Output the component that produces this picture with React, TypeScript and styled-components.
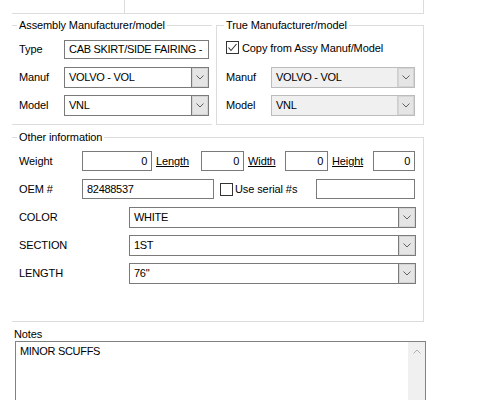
import { ReactNode } from "react";
import styled, { createGlobalStyle } from "styled-components";

const GlobalStyle = createGlobalStyle`
  body {
    margin: 0;
    background: #ffffff;
    font-family: "Liberation Sans", Arial, sans-serif;
    font-size: 11px;
    letter-spacing: -0.1px;
    color: #000000;
  }
`;

const Page = styled.div`
  width: 412px;
  margin-left: 12px;
`;

/* bottom edge of the panel above the group boxes */
const TopStrip = styled.div`
  display: flex;
  height: 13px;
  border-bottom: 1px solid #dcdcdc;
  border-right: 1px solid #dcdcdc;
`;

const StripCell = styled.div`
  width: 112px;
  border-right: 1px solid #dcdcdc;
`;

const GroupRow = styled.div`
  display: flex;
  gap: 4px;
  margin-top: 4px;
`;

interface GroupProps {
  $width: number;
  $noLeft?: boolean;
  $noRight?: boolean;
  $top?: number;
}

const Group = styled.fieldset<GroupProps>`
  box-sizing: border-box;
  width: ${(p) => p.$width}px;
  margin: ${(p) => p.$top ?? 0}px 0 0 0;
  padding: 0;
  min-width: 0;
  border: 1px solid #dcdcdc;
  ${(p) => (p.$noLeft ? "border-left: none;" : "")}
  ${(p) => (p.$noRight ? "border-right: none;" : "")}
`;

const Legend = styled.legend<{ $offset: number }>`
  margin-left: ${(p) => p.$offset}px;
  padding: 0 2px;
  line-height: 14px;
  font-size: 11px;
`;

interface StackProps {
  $left: number;
  $bottom: number;
}

const Stack = styled.div<StackProps>`
  display: grid;
  grid-auto-rows: 28px;
  align-items: center;
  padding: 3px 8px ${(p) => p.$bottom}px ${(p) => p.$left}px;
`;

const Row = styled.div`
  display: flex;
  align-items: center;
`;

const Label = styled.span<{ $w: number }>`
  flex: none;
  width: ${(p) => p.$w}px;
  white-space: nowrap;
`;

const LinkLabel = styled(Label)`
  padding-left: 4px;
  box-sizing: border-box;
  text-decoration: underline;
`;

const CheckLabel = styled.span<{ $w: number }>`
  flex: none;
  box-sizing: border-box;
  display: flex;
  align-items: center;
  width: ${(p) => p.$w}px;
  padding-left: 6px;
  white-space: nowrap;
`;

const TextBox = styled.div<{ $w: number; $h?: number; $right?: boolean }>`
  box-sizing: border-box;
  flex: none;
  width: ${(p) => p.$w}px;
  height: ${(p) => p.$h ?? 20}px;
  border: 1px solid #7a7a7a;
  background: #ffffff;
  padding: 0 4px;
  display: flex;
  align-items: center;
  justify-content: ${(p) => (p.$right ? "flex-end" : "flex-start")};
  white-space: nowrap;
  overflow: hidden;
  letter-spacing: -0.3px;
`;

const ComboBox = styled.div<{ $w: number; $disabled?: boolean }>`
  box-sizing: border-box;
  flex: none;
  display: flex;
  width: ${(p) => p.$w}px;
  height: 21px;
  border: 1px solid ${(p) => (p.$disabled ? "#bcbcbc" : "#7a7a7a")};
  background: ${(p) => (p.$disabled ? "#f0f0f0" : "#ffffff")};
`;

const ComboValue = styled.div`
  flex: 1;
  display: flex;
  align-items: center;
  padding-left: 4px;
  white-space: nowrap;
  overflow: hidden;
  letter-spacing: -0.3px;
`;

const ComboButton = styled.div<{ $disabled?: boolean }>`
  flex: none;
  width: 16px;
  display: flex;
  align-items: center;
  justify-content: center;
  background: #e5e5e5;
  border-left: 1px solid ${(p) => (p.$disabled ? "#cfcfcf" : "#7a7a7a")};
  box-shadow: inset 0 0 0 1px #d4d4d4;
`;

const CheckRow = styled(Row)`
  align-self: start;
  margin-top: 6px;
`;

const CheckBox = styled.span<{ $gap?: number }>`
  box-sizing: border-box;
  flex: none;
  width: 13px;
  height: 13px;
  border: 1px solid #333333;
  background: #ffffff;
  margin-right: ${(p) => p.$gap ?? 3}px;
  display: flex;
  align-items: center;
  justify-content: center;
`;

const NotesLabel = styled.div`
  margin: 5px 0 0 2px;
  line-height: 14px;
`;

const NotesBox = styled.div`
  box-sizing: border-box;
  display: flex;
  width: 411px;
  height: 70px;
  margin-left: 3px;
  border: 1px solid #828282;
  background: #ffffff;
`;

const NotesText = styled.div`
  flex: 1;
  padding: 2px 4px;
  line-height: 14px;
  letter-spacing: -0.3px;
`;

const ScrollTrack = styled.div`
  flex: none;
  width: 17px;
  background: #f0f0f0;
  display: flex;
  justify-content: center;
  padding-top: 7px;
`;

function Chevron({ up = false, color = "#606060" }: { up?: boolean; color?: string }) {
  return (
    <svg width="8" height="5" viewBox="0 0 8 5">
      <polyline
        points={up ? "0.5,4.5 4,1 7.5,4.5" : "0.5,0.5 4,4 7.5,0.5"}
        fill="none"
        stroke={color}
        strokeWidth="1"
      />
    </svg>
  );
}

function Combo({ value, width, disabled }: { value: string; width: number; disabled?: boolean }) {
  return (
    <ComboBox $w={width} $disabled={disabled}>
      <ComboValue>{value}</ComboValue>
      <ComboButton $disabled={disabled}>
        <Chevron />
      </ComboButton>
    </ComboBox>
  );
}

function Check({ checked, gap, children }: { checked?: boolean; gap?: number; children: ReactNode }) {
  return (
    <>
      <CheckBox $gap={gap}>
        {checked && (
          <svg width="11" height="11" viewBox="0 0 11 11">
            <polyline points="1.5,5.5 4,8.5 9.5,2" fill="none" stroke="#333333" strokeWidth="1.1" />
          </svg>
        )}
      </CheckBox>
      <span>{children}</span>
    </>
  );
}

const attributes = [
  { name: "COLOR", value: "WHITE" },
  { name: "SECTION", value: "1ST" },
  { name: "LENGTH", value: "76\"" },
];

export default function App() {
  return (
    <>
      <GlobalStyle />
      <Page>
        <TopStrip>
          <StripCell />
        </TopStrip>

        <GroupRow>
          <Group $width={200} $noLeft $noRight>
            <Legend $offset={5}>Assembly Manufacturer/model</Legend>
            <Stack $left={7} $bottom={5}>
              <Row>
                <Label $w={45}>Type</Label>
                <TextBox $w={145} $h={19}>CAB SKIRT/SIDE FAIRING -</TextBox>
              </Row>
              <Row>
                <Label $w={45}>Manuf</Label>
                <Combo value="VOLVO - VOL" width={145} />
              </Row>
              <Row>
                <Label $w={45}>Model</Label>
                <Combo value="VNL" width={145} />
              </Row>
            </Stack>
          </Group>

          <Group $width={208}>
            <Legend $offset={7}>True Manufacturer/model</Legend>
            <Stack $left={9} $bottom={5}>
              <CheckRow>
                <Check checked>Copy from Assy Manuf/Model</Check>
              </CheckRow>
              <Row>
                <Label $w={45}>Manuf</Label>
                <Combo value="VOLVO - VOL" width={144} disabled />
              </Row>
              <Row>
                <Label $w={45}>Model</Label>
                <Combo value="VNL" width={144} disabled />
              </Row>
            </Stack>
          </Group>
        </GroupRow>

        <Group $width={412} $noLeft $top={5}>
          <Legend $offset={5}>Other information</Legend>
          <Stack $left={7} $bottom={34}>
            <Row>
              <Label $w={63}>Weight</Label>
              <TextBox $w={70} $right>0</TextBox>
              <LinkLabel $w={49}>Length</LinkLabel>
              <TextBox $w={43} $right>0</TextBox>
              <LinkLabel $w={41}>Width</LinkLabel>
              <TextBox $w={43} $right>0</TextBox>
              <LinkLabel $w={45}>Height</LinkLabel>
              <TextBox $w={42} $right>0</TextBox>
            </Row>
            <Row>
              <Label $w={63}>OEM #</Label>
              <TextBox $w={132}>82488537</TextBox>
              <CheckLabel $w={102}>
                <Check gap={2}>Use serial #s</Check>
              </CheckLabel>
              <TextBox $w={99} />
            </Row>
            {attributes.map((a) => (
              <Row key={a.name}>
                <Label $w={110}>{a.name}</Label>
                <Combo value={a.value} width={287} />
              </Row>
            ))}
          </Stack>
        </Group>

        <NotesLabel>Notes</NotesLabel>
        <NotesBox>
          <NotesText>MINOR SCUFFS</NotesText>
          <ScrollTrack>
            <Chevron up color="#b0b0b0" />
          </ScrollTrack>
        </NotesBox>
      </Page>
    </>
  );
}
